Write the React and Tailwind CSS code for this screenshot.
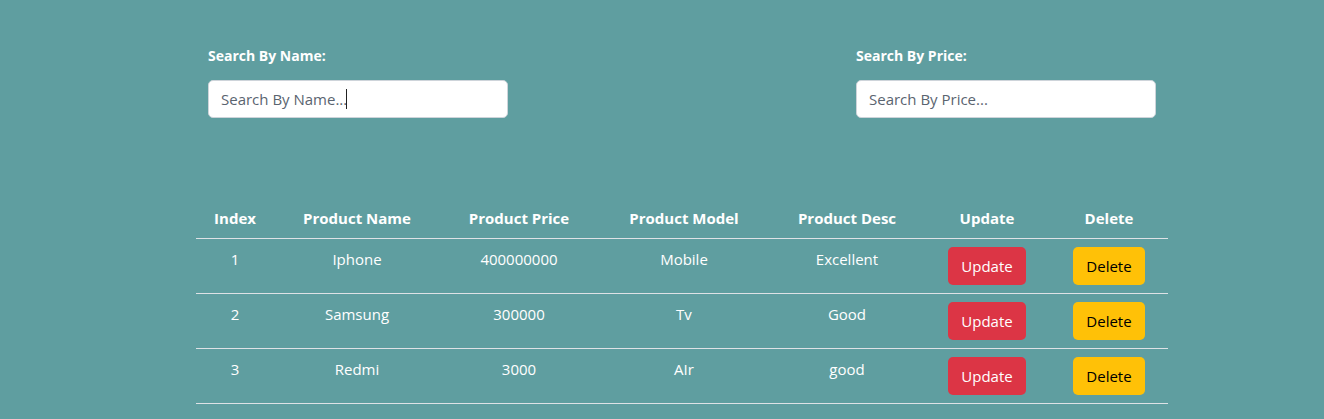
import React from "react";

const rows = [
  { i: 1, name: "Iphone", price: "400000000", model: "Mobile", desc: "Excellent" },
  { i: 2, name: "Samsung", price: "300000", model: "Tv", desc: "Good" },
  { i: 3, name: "Redmi", price: "3000", model: "AIr", desc: "good" },
];

const widths = ["w-[78px]", "w-[166px]", "w-[158px]", "w-[172px]", "w-[154px]", "w-[126px]", "w-[118px]"];
const heads = ["Index", "Product Name", "Product Price", "Product Model", "Product Desc", "Update", "Delete"];

export default function App() {
  return (
    <div
      className="min-h-[419px] w-full bg-[#5f9ea0] text-white"
      style={{ fontFamily: '"Open Sans", "Noto Sans", sans-serif' }}
    >
      <div className="ml-[196px] w-[972px] pt-[46px]">
        <div className="flex justify-between px-[12px]">
          <div className="flex flex-col">
            <label className="text-[14px] font-bold leading-[20px]">Search By Name:</label>
            <div className="relative mt-[14px]">
              <input
                className="h-[38px] w-[300px] rounded-[5px] border border-[#ced4da] bg-white px-[12px] text-[15px] text-[#212529] placeholder:text-[#5a6470] outline-none"
                placeholder="Search By Name..."
              />
              <span className="absolute left-[138px] top-[9px] h-[20px] w-px bg-[#222]" />
            </div>
          </div>
          <div className="flex flex-col">
            <label className="text-[14px] font-bold leading-[20px]">Search By Price:</label>
            <input
              className="mt-[14px] h-[38px] w-[300px] rounded-[5px] border border-[#ced4da] bg-white px-[12px] text-[15px] text-[#212529] placeholder:text-[#5a6470] outline-none"
              placeholder="Search By Price..."
            />
          </div>
        </div>

        <table className="mt-[80px] w-[972px] table-fixed border-collapse text-[15px]">
          <thead>
            <tr className="border-b border-[#dee2e6]">
              {heads.map((h, k) => (
                <th key={h} className={`${widths[k]} h-[40px] px-[8px] py-[8px] text-center font-bold leading-[24px]`}>
                  {h}
                </th>
              ))}
            </tr>
          </thead>
          <tbody>
            {rows.map((r) => (
              <tr key={r.i} className="border-b border-[#dee2e6]">
                <td className="px-[8px] pt-[8px] pb-[8px] text-center align-top leading-[24px]">{r.i}</td>
                <td className="px-[8px] pt-[8px] text-center align-top leading-[24px]">{r.name}</td>
                <td className="px-[8px] pt-[8px] text-center align-top leading-[24px]">{r.price}</td>
                <td className="px-[8px] pt-[8px] text-center align-top leading-[24px]">{r.model}</td>
                <td className="px-[8px] pt-[8px] text-center align-top leading-[24px]">{r.desc}</td>
                <td className="px-[8px] pt-[8px] pb-[8px] text-center align-top">
                  <button className="h-[38px] w-[78px] rounded-[5px] bg-[#dc3545] text-[15px] text-white">Update</button>
                </td>
                <td className="px-[8px] pt-[8px] pb-[8px] text-center align-top">
                  <button className="h-[38px] w-[72px] rounded-[5px] bg-[#ffc107] text-[15px] text-black">Delete</button>
                </td>
              </tr>
            ))}
          </tbody>
        </table>
      </div>
    </div>
  );
}
